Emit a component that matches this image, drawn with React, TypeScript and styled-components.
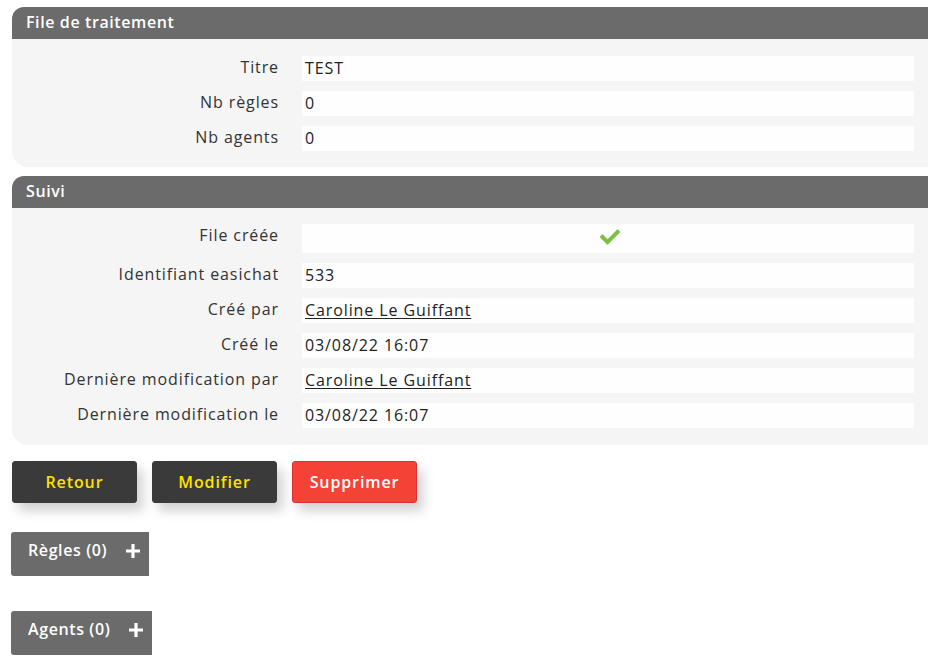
import styled, { createGlobalStyle } from "styled-components";
import { FaCheck } from "react-icons/fa";

const GlobalStyle = createGlobalStyle`
  body {
    margin: 0;
    background: #ffffff;
    font-family: "Open Sans", "Liberation Sans", sans-serif;
    color: #333333;
    letter-spacing: 0.9px;
    overflow: hidden;
  }
`;

const Page = styled.div`
  padding: 7px 0 0 12px;
`;

const Panel = styled.section`
  background: #f5f5f5;
  border-top-left-radius: 12px;
  border-bottom-left-radius: 16px;
  overflow: hidden;
  margin-bottom: 9px;
`;

const PanelHeader = styled.h2`
  margin: 0;
  height: 32px;
  line-height: 31px;
  padding-left: 14px;
  background: #6b6b6b;
  color: #ffffff;
  font-size: 16px;
  font-weight: 600;
  letter-spacing: 0.6px;
`;

const PanelBody = styled.div<{ $top: number; $bottom: number }>`
  display: flex;
  flex-direction: column;
  gap: 10px;
  padding: ${(p) => `${p.$top}px 14px ${p.$bottom}px 0`};
`;

const Row = styled.div`
  display: grid;
  grid-template-columns: 267px 1fr;
  column-gap: 23px;
  align-items: start;
`;

const Label = styled.div`
  text-align: right;
  font-size: 16px;
  line-height: 22px;
  color: #333333;
`;

const Value = styled.div<{ $tall?: boolean; $center?: boolean }>`
  background: #fefefe;
  height: ${(p) => (p.$tall ? "29px" : "25px")};
  line-height: 25px;
  padding-left: 3px;
  font-size: 16px;
  color: #222222;
  display: flex;
  align-items: center;
  justify-content: ${(p) => (p.$center ? "center" : "flex-start")};
`;

const UserLink = styled.a`
  color: #222222;
  text-decoration: underline;
  text-underline-offset: 2px;
`;

const Check = styled(FaCheck)`
  color: #7ac143;
  font-size: 20px;
  margin-bottom: 3px;
`;

const Actions = styled.div`
  display: flex;
  gap: 15px;
  margin-top: 16px;
`;

const Button = styled.button<{ $danger?: boolean }>`
  width: 125px;
  height: 42px;
  border-radius: 3px;
  border: 1px solid ${(p) => (p.$danger ? "#d9303a" : "#3a3a3a")};
  background: ${(p) => (p.$danger ? "#f44336" : "#3a3a3a")};
  color: ${(p) => (p.$danger ? "#ffffff" : "#ffe200")};
  font-family: inherit;
  font-size: 16px;
  font-weight: 600;
  letter-spacing: 0.9px;
  box-shadow: 6px 8px 12px rgba(0, 0, 0, 0.18);
  cursor: pointer;
`;

const Tabs = styled.div`
  display: flex;
  flex-direction: column;
  align-items: flex-start;
  gap: 35px;
  margin-top: 29px;
  margin-left: -1px;
`;

const Tab = styled.div`
  display: flex;
  align-items: flex-start;
  height: 44px;
  box-sizing: border-box;
  padding: 7px 8px 0 17px;
  background: #6b6b6b;
  border-radius: 3px 0 0 3px;
  color: #ffffff;
  font-size: 16px;
  font-weight: 600;
  letter-spacing: 0.6px;
`;

const TabLabel = styled.span`
  line-height: 22px;
`;

const PlusIcon = styled.svg`
  width: 16px;
  height: 16px;
  margin: 4px 0 0 18px;
`;

const Plus = () => (
  <PlusIcon viewBox="0 0 16 16">
    <path d="M8 1v14M1 8h14" stroke="#ffffff" strokeWidth="3.2" />
  </PlusIcon>
);

const user = "Caroline Le Guiffant";

export default function App() {
  return (
    <Page>
      <GlobalStyle />
      <Panel>
        <PanelHeader>File de traitement</PanelHeader>
        <PanelBody $top={17} $bottom={16}>
          <Row>
            <Label>Titre</Label>
            <Value>TEST</Value>
          </Row>
          <Row>
            <Label>Nb règles</Label>
            <Value>0</Value>
          </Row>
          <Row>
            <Label>Nb agents</Label>
            <Value>0</Value>
          </Row>
        </PanelBody>
      </Panel>

      <Panel>
        <PanelHeader>Suivi</PanelHeader>
        <PanelBody $top={16} $bottom={17}>
          <Row>
            <Label>File créée</Label>
            <Value $tall $center>
              <Check />
            </Value>
          </Row>
          <Row>
            <Label>Identifiant easichat</Label>
            <Value>533</Value>
          </Row>
          <Row>
            <Label>Créé par</Label>
            <Value>
              <UserLink href="#">{user}</UserLink>
            </Value>
          </Row>
          <Row>
            <Label>Créé le</Label>
            <Value>03/08/22 16:07</Value>
          </Row>
          <Row>
            <Label>Dernière modification par</Label>
            <Value>
              <UserLink href="#">{user}</UserLink>
            </Value>
          </Row>
          <Row>
            <Label>Dernière modification le</Label>
            <Value>03/08/22 16:07</Value>
          </Row>
        </PanelBody>
      </Panel>

      <Actions>
        <Button>Retour</Button>
        <Button>Modifier</Button>
        <Button $danger>Supprimer</Button>
      </Actions>

      <Tabs>
        <Tab>
          <TabLabel>Règles (0)</TabLabel>
          <Plus />
        </Tab>
        <Tab>
          <TabLabel>Agents (0)</TabLabel>
          <Plus />
        </Tab>
      </Tabs>
    </Page>
  );
}
